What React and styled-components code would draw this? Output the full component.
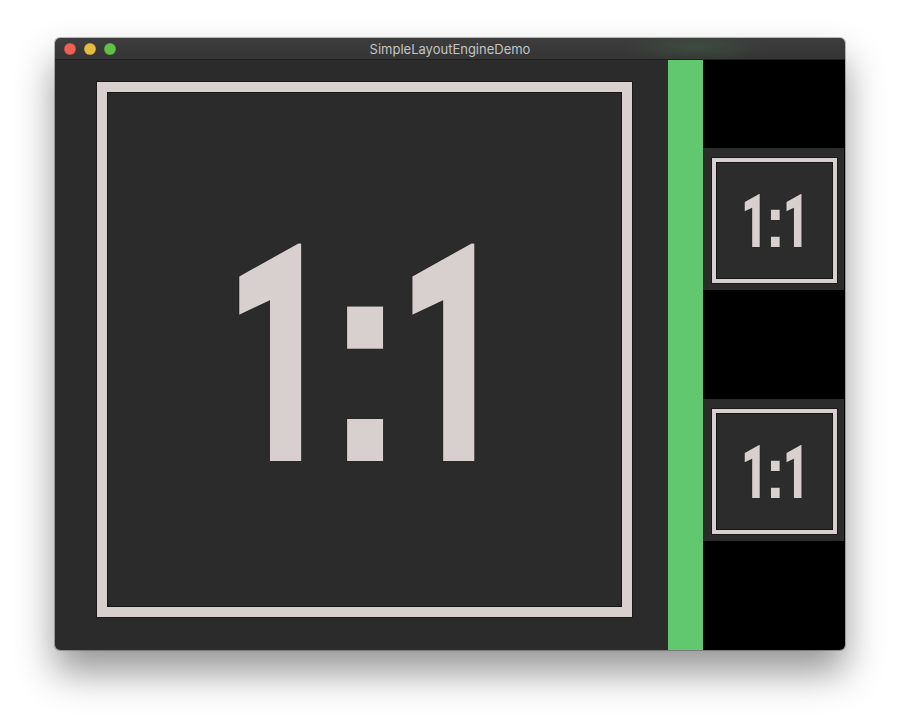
import React from "react";
import styled, { createGlobalStyle } from "styled-components";

const Global = createGlobalStyle`
  html, body {
    margin: 0;
    background: #ffffff;
  }
`;

const Page = styled.div`
  width: 900px;
  height: 724px;
  padding: 38px 0 0 55px;
  box-sizing: border-box;
`;

const Window = styled.div`
  width: 790px;
  height: 612px;
  border-radius: 5px;
  overflow: hidden;
  display: flex;
  flex-direction: column;
  box-shadow: 0 22px 38px rgba(0, 0, 0, 0.42), 0 0 0 1px rgba(0, 0, 0, 0.25);
`;

const TitleBar = styled.div`
  height: 21px;
  flex: none;
  position: relative;
  display: flex;
  align-items: center;
  justify-content: center;
  background:
    radial-gradient(ellipse 70px 14px at 640px 10px, rgba(98, 199, 111, 0.12), transparent),
    linear-gradient(#3d3d3d, #353535);
  border-bottom: 1px solid #1f1f1f;
  font-family: "Inter", "Liberation Sans", sans-serif;
  font-size: 13px;
  color: #c4c4c4;
`;

const Lights = styled.div`
  position: absolute;
  left: 9px;
  top: 5px;
  display: flex;
  gap: 8px;
`;

const Light = styled.span`
  width: 12px;
  height: 12px;
  border-radius: 50%;
  background: ${(p) => p.color};
  box-shadow: inset 0 0 0 0.5px rgba(0, 0, 0, 0.25);
`;

const Content = styled.div`
  flex: 1;
  display: flex;
`;

const LeftPane = styled.div`
  width: 613px;
  background: #2b2b2b;
  padding: 22px 0 0 42px;
  box-sizing: border-box;
`;

const Frame = styled.div`
  box-sizing: border-box;
  width: ${(p) => p.size}px;
  height: ${(p) => p.size}px;
  border: ${(p) => p.border}px solid #d8cfcf;
  box-shadow: inset 0 0 0 1px #161616, 0 0 0 1px #1a1a1a;
  display: flex;
  align-items: center;
  justify-content: center;
  padding: ${(p) => p.pad};
  overflow: hidden;
`;

const Ratio = styled.span`
  font-family: "Roboto", "Liberation Sans", sans-serif;
  font-weight: 900;
  font-size: ${(p) => p.size}px;
  line-height: 1;
  color: #d8cfcf;
  transform: scaleX(0.62);
  text-shadow: 0 0 1px #000;
  white-space: nowrap;
`;

const Colon = styled.span`
  display: inline-block;
  font-family: "Liberation Sans", sans-serif;
  font-weight: 700;
  transform: scaleX(1.35);
`;

const GreenBar = styled.div`
  width: 35px;
  background: #62c870;
`;

const RightPane = styled.div`
  width: 142px;
  background: #000;
  display: flex;
  flex-direction: column;
`;

const Cell = styled.div`
  width: 141px;
  height: 142px;
  margin-top: ${(p) => p.top}px;
  background: #2c2c2c;
  padding: 10px 7px 7px 9px;
  box-sizing: border-box;
`;

const Label = ({ size }) => (
  <Ratio size={size}>
    1<Colon>:</Colon>1
  </Ratio>
);

export default function App() {
  return (
    <Page>
      <Global />
      <Window>
        <TitleBar>
          <Lights>
            <Light color="#ee5f56" />
            <Light color="#e3bc40" />
            <Light color="#60c146" />
          </Lights>
          SimpleLayoutEngineDemo
        </TitleBar>
        <Content>
          <LeftPane>
            <Frame size={535} border={10} pad="12px 0 0 2px">
              <Label size={306} />
            </Frame>
          </LeftPane>
          <GreenBar />
          <RightPane>
            <Cell top={88}>
              <Frame size={125} border={4} pad="2px 0 0 2px">
                <Label size={74} />
              </Frame>
            </Cell>
            <Cell top={109}>
              <Frame size={125} border={4} pad="2px 0 0 2px">
                <Label size={74} />
              </Frame>
            </Cell>
          </RightPane>
        </Content>
      </Window>
    </Page>
  );
}
